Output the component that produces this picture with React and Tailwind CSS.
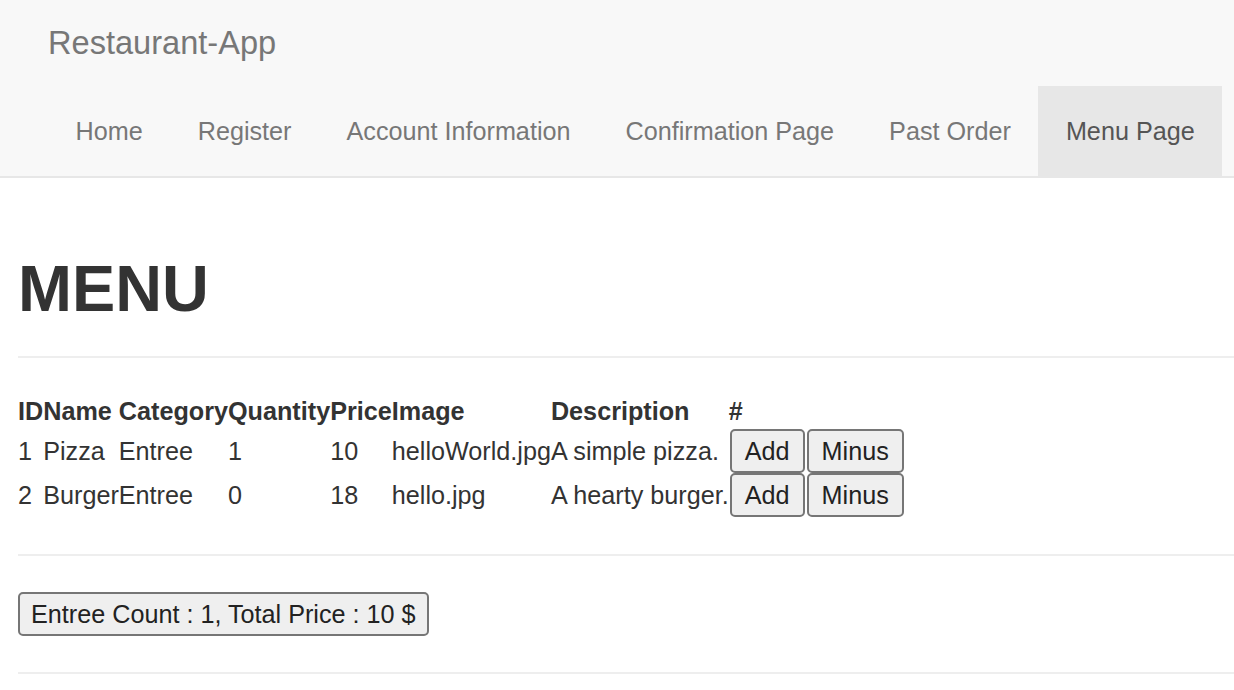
import React, { useState } from 'react';

const navLinks = ['Home', 'Register', 'Account Information', 'Confirmation Page', 'Past Order', 'Menu Page'];

const initialItems = [
  { id: 1, name: 'Pizza', category: 'Entree', quantity: 1, price: 10, image: 'helloWorld.jpg', description: 'A simple pizza.' },
  { id: 2, name: 'Burger', category: 'Entree', quantity: 0, price: 18, image: 'hello.jpg', description: 'A hearty burger.' },
];

const btn =
  'bg-[#efefef] border-2 border-[#767676] rounded-[5px] py-[2px] leading-[36px] text-[#222] text-[25.2px]';

function App() {
  const [items, setItems] = useState(initialItems);
  const active = 'Menu Page';

  const change = (id, delta) => {
    setItems(prev => prev.map(i => (i.id === id ? { ...i, quantity: Math.max(0, i.quantity + delta) } : i)));
  };

  const count = items.reduce((s, i) => s + i.quantity, 0);
  const total = items.reduce((s, i) => s + i.quantity * i.price, 0);

  return (
    <div className="min-h-[690px] bg-white text-[#333] text-[25.2px] leading-[36px]" style={{ fontFamily: '"Liberation Sans", Arial, sans-serif' }}>
      {/* Navbar */}
      <nav className="bg-[#f8f8f8] border-b-2 border-[#e7e7e7]">
        <div className="h-[86px] pl-[48px] pt-[25px]">
          <span className="text-[32.6px] leading-[36px] text-[#777]">Restaurant-App</span>
        </div>
        <ul className="flex pl-[48px]">
          {navLinks.map(link => (
            <li key={link}>
              <a
                className={`block px-[27.5px] py-[27px] leading-[36px] ${
                  link === active ? 'bg-[#e7e7e7] text-[#555]' : 'text-[#777]'
                }`}
              >
                {link}
              </a>
            </li>
          ))}
        </ul>
      </nav>

      {/* Content */}
      <div className="pl-[18px]">
        <h1 className="mt-[75px] text-[64.8px] leading-[71px] font-bold text-[#333] h-[67px]">MENU</h1>
        <hr className="mt-[36px] mb-[35px] border-0 h-[2px] bg-[#eee]" />

        <table className="border-collapse">
          <thead>
            <tr className="h-[36px]">
              {['ID', 'Name', 'Category', 'Quantity', 'Price', 'Image', 'Description', '#'].map(h => (
                <th key={h} className="p-0 text-left font-bold">{h}</th>
              ))}
            </tr>
          </thead>
          <tbody>
            {items.map(item => (
              <tr key={item.id}>
                <td className="p-0">{item.id}</td>
                <td className="p-0">{item.name}</td>
                <td className="p-0">{item.category}</td>
                <td className="p-0">{item.quantity}</td>
                <td className="p-0">{item.price}</td>
                <td className="p-0">{item.image}</td>
                <td className="p-0">{item.description}</td>
                <td className="p-0">
                  <div className="flex gap-[2px] pl-[1px]">
                    <button className={`${btn} px-[13px]`} onClick={() => change(item.id, 1)}>Add</button>
                    <button className={`${btn} px-[13px]`} onClick={() => change(item.id, -1)}>Minus</button>
                  </div>
                </td>
              </tr>
            ))}
          </tbody>
        </table>

        <hr className="mt-[37px] mb-[36px] border-0 h-[2px] bg-[#eee]" />
        <button className={`${btn} px-[11px]`}>
          Entree Count : {count}, Total Price : {total} $
        </button>
        <hr className="mt-[36px] border-0 h-[2px] bg-[#eee]" />
      </div>
    </div>
  );
}

export default App;
